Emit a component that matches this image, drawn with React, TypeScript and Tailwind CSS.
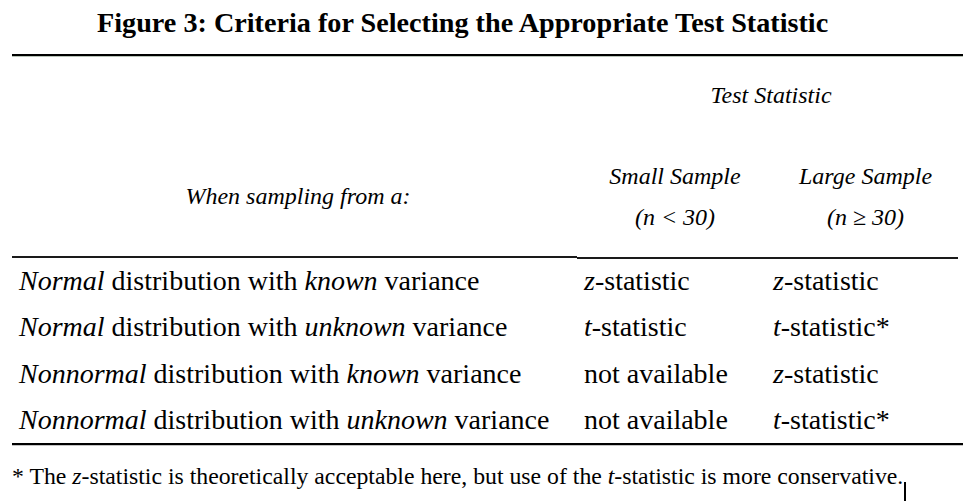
import React from "react";

const rows: { a: React.ReactNode; b: React.ReactNode; c: React.ReactNode }[] = [
  {
    a: (
      <>
        <i>Normal</i> distribution with <i>known</i> variance
      </>
    ),
    b: (
      <>
        <i>z</i>-statistic
      </>
    ),
    c: (
      <>
        <i>z</i>-statistic
      </>
    ),
  },
  {
    a: (
      <>
        <i>Normal</i> distribution with <i>unknown</i> variance
      </>
    ),
    b: (
      <>
        <i>t</i>-statistic
      </>
    ),
    c: (
      <>
        <i>t</i>-statistic*
      </>
    ),
  },
  {
    a: (
      <>
        <i>Nonnormal</i> distribution with <i>known</i> variance
      </>
    ),
    b: <>not available</>,
    c: (
      <>
        <i>z</i>-statistic
      </>
    ),
  },
  {
    a: (
      <>
        <i>Nonnormal</i> distribution with <i>unknown</i> variance
      </>
    ),
    b: <>not available</>,
    c: (
      <>
        <i>t</i>-statistic*
      </>
    ),
  },
];

export default function App() {
  return (
    <div className="w-[975px] h-[501px] bg-white text-black font-['Liberation_Serif','Times_New_Roman',serif] overflow-hidden">
      {/* Title */}
      <div className="pt-[7px] pl-[97px] text-[28.2px] leading-[32px] font-bold whitespace-nowrap">
        Figure 3: Criteria for Selecting the Appropriate Test Statistic
      </div>

      {/* Top rule */}
      <div className="mx-[12px] mt-[15px]">
        <div className="h-[2px] bg-black" />
        <div className="h-[1px] bg-[#b9c4b9]" />
      </div>

      {/* Header */}
      <div className="mx-[12px] flex items-start">
        <div className="w-[565px] h-[201px] border-b-2 border-[#1a1a1a] pl-[7px] pt-[125px] text-center italic text-[24px] leading-[28px]">
          When sampling from a:
        </div>
        <div className="w-[381px] h-[202px] border-b-2 border-[#1a1a1a] flex flex-col italic text-[24px]">
          <div className="pl-[7px] pt-[24px] text-center leading-[28px]">Test Statistic</div>
          <div className="flex mt-[47px] leading-[41px]">
            <div className="w-[189px] pl-[7px] text-center">
              <div>Small Sample</div>
              <div>(n &lt; 30)</div>
            </div>
            <div className="w-[192px] pl-[7px] text-center">
              <div>Large Sample</div>
              <div>(n ≥ 30)</div>
            </div>
          </div>
        </div>
      </div>

      {/* Rows */}
      <div className="mx-[12px] pt-[2px] flex flex-col gap-[6.33px] text-[28px] leading-[40px] whitespace-nowrap">
        {rows.map((r, i) => (
          <div key={i} className="flex">
            <div className="w-[565px] pl-[7px]">{r.a}</div>
            <div className="w-[189px] pl-[7px]">{r.b}</div>
            <div className="w-[192px] pl-[7px]">{r.c}</div>
          </div>
        ))}
      </div>

      {/* Bottom rule */}
      <div className="mx-[12px] mt-[3px]">
        <div className="h-[2px] bg-black" />
        <div className="h-[1px] bg-[#c4c4c4]" />
      </div>

      {/* Footnote */}
      <div className="mt-[16px] pl-[12px] text-[23.75px] leading-[28px] whitespace-nowrap">
        * The <i>z</i>-statistic is theoretically acceptable here, but use of the <i>t</i>-statistic is more
        conservative.
        <span className="inline-block relative top-[17px] ml-[1px] w-[2px] h-[19px] bg-black align-baseline" />
      </div>
    </div>
  );
}
